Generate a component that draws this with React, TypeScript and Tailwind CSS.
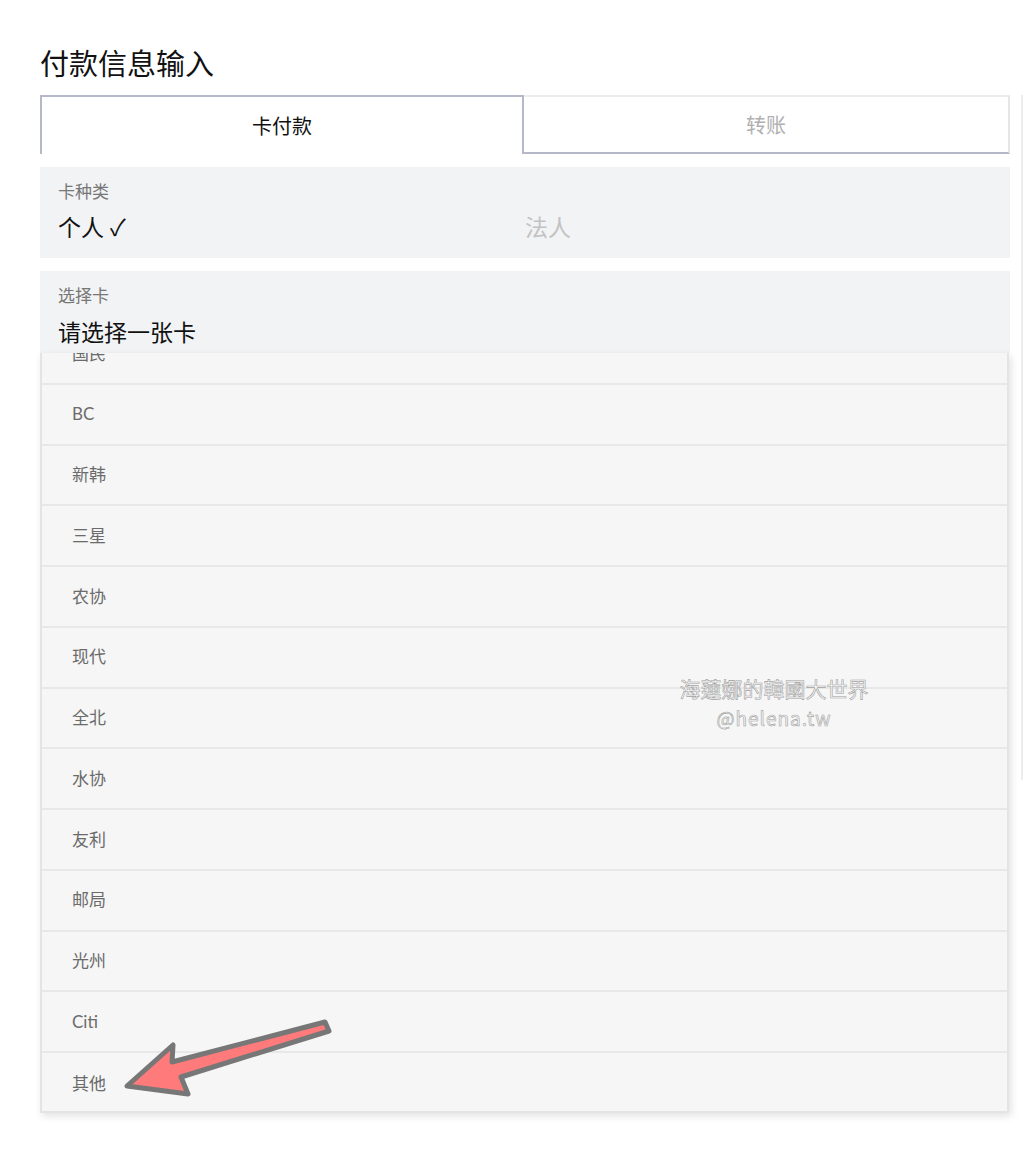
import React from "react";

const BANKS = ["国民", "BC", "新韩", "三星", "农协", "现代", "全北", "水协", "友利", "邮局", "光州", "Citi", "其他"];

export default function App() {
  return (
    <div className="relative min-h-[1159px] bg-white font-['Lato','Noto_Sans_CJK_SC',sans-serif] text-[#111]">
      {/* right edge line */}
      <div className="absolute left-[1021px] top-[95px] h-[685px] w-[2px] bg-[#ececec]" />

      <div className="ml-10 w-[970px] pt-[44px]">
        <h1 className="h-[51px] text-[29px] leading-[40px] font-normal">付款信息输入</h1>

        {/* tabs */}
        <div className="flex h-[59px]">
          <div className="flex flex-1 items-center justify-center border-x-2 border-t-2 border-[#b5b8c8] text-[20px]">
            卡付款
          </div>
          <div className="flex w-[486px] items-center justify-center border-t-2 border-r-2 border-b-2 border-t-[#ececec] border-r-[#e6e6e6] border-b-[#b5b8c8] text-[20px] text-[#b0b0b0]">
            转账
          </div>
        </div>

        {/* card type */}
        <div className="mt-[13px] h-[91px] bg-[#f2f3f5] px-[18px] pt-[14px]">
          <div className="text-[17px] leading-[22px] text-[#777]">卡种类</div>
          <div className="mt-[9px] grid grid-cols-2 text-[23px] leading-[30px]">
            <span>个人 ✓</span>
            <span className="text-[#c2c2c2]">法人</span>
          </div>
        </div>

        {/* select card */}
        <div className="mt-[13px] h-[82px] bg-[#f2f3f5] px-[18px] pt-[14px]">
          <div className="text-[17px] leading-[22px] text-[#777]">选择卡</div>
          <div className="mt-[10px] text-[23px] leading-[30px]">请选择一张卡</div>
        </div>

        {/* dropdown */}
        <div className="relative h-[760px] w-[969px] overflow-hidden border-x-2 border-b-2 border-[#e4e4e4] bg-[#f6f6f6] shadow-[2px_3px_8px_rgba(0,0,0,0.12)]">
          <div className="-mt-[29px]">
            {BANKS.map((b, i) => (
              <div
                key={b}
                className={`flex h-[60.75px] items-center pl-[30px] text-[17px] text-[#6b6b6b] ${i < BANKS.length - 1 ? "border-b-2 border-[#e8e8e8]" : ""}`}
              >
                {b}
              </div>
            ))}
          </div>
        </div>
      </div>

      {/* watermark */}
      <div className="absolute left-[660px] top-[674px] w-[228px] text-center font-['Noto_Sans_CJK_TC',sans-serif] leading-[29px] text-[#fbfbfb] [-webkit-text-stroke:0.6px_#a0a0a0]">
        <div className="text-[21px]">海蓮娜的韓國大世界</div>
        <div className="text-[19px] tracking-[1px]">@helena.tw</div>
      </div>

      {/* arrow */}
      <svg className="absolute left-0 top-0" width="1024" height="1159" viewBox="0 0 1024 1159" fill="none">
        <polygon
          points="127,1086 173,1045 172,1062 325,1022 329,1031 181,1077 188,1094"
          fill="#ff7b7b"
          stroke="#777"
          strokeWidth="5"
          strokeLinejoin="round"
        />
      </svg>
    </div>
  );
}
